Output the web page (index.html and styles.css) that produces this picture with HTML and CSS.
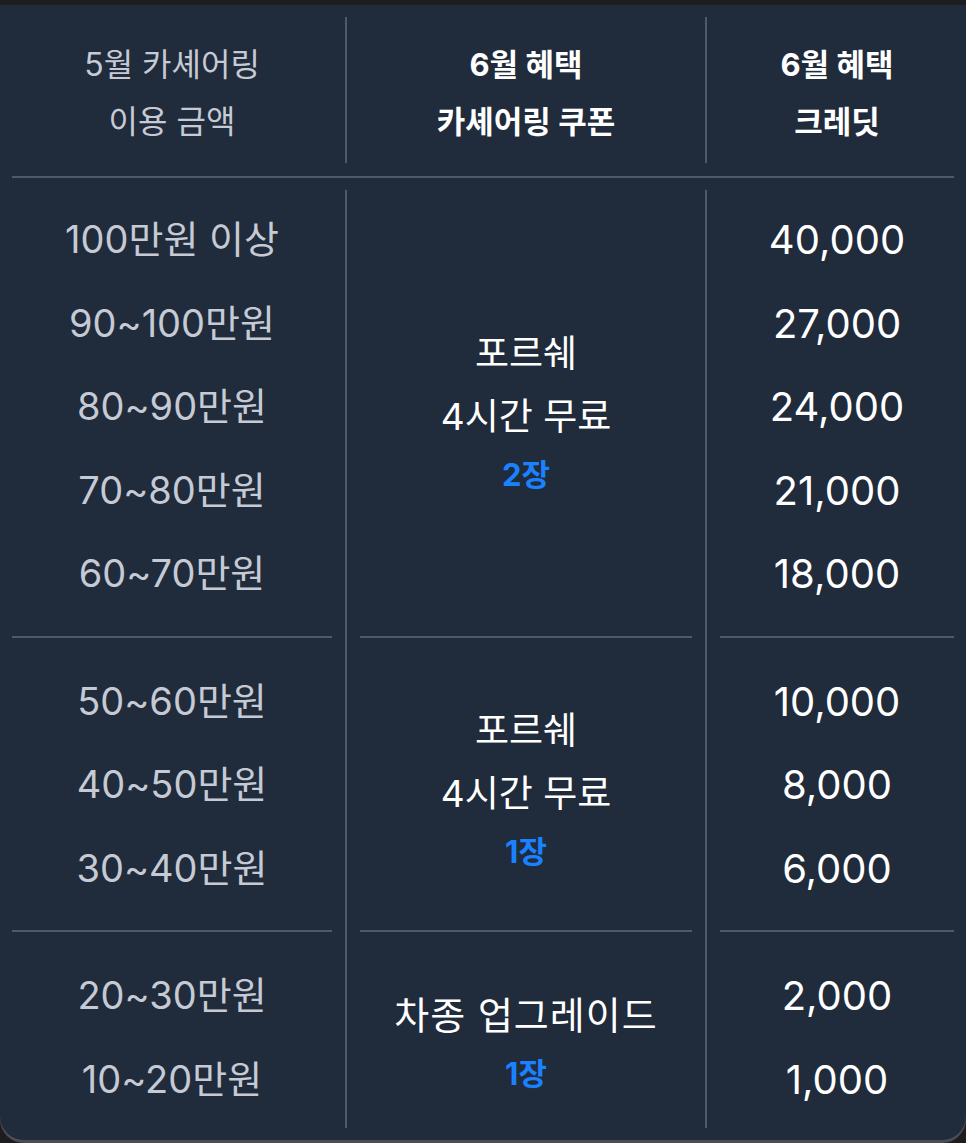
FILE: index.html
```html
<!DOCTYPE html>
<html lang="ko">
<head>
<meta charset="utf-8">
<link rel="stylesheet" href="styles.css">
</head>
<body>
<div class="panel">
  <div class="head">
    <div class="hcell c1">
      <div class="hl">5월 카셰어링</div>
      <div class="hl">이용 금액</div>
    </div>
    <div class="vdiv hv1"></div>
    <div class="hcell c2 strong">
      <div class="hl">6월 혜택</div>
      <div class="hl">카셰어링 쿠폰</div>
    </div>
    <div class="vdiv hv2"></div>
    <div class="hcell c3 strong">
      <div class="hl">6월 혜택</div>
      <div class="hl">크레딧</div>
    </div>
  </div>
  <div class="hrule"></div>
  <div class="body">
    <div class="vdiv v1"></div>
    <div class="vdiv v2"></div>

    <div class="g g1 col1 first"><div class="r">100만원 이상</div><div class="r">90~100만원</div><div class="r">80~90만원</div><div class="r">70~80만원</div><div class="r">60~70만원</div></div>
    <div class="g g1 col2 first mid1"><div class="m">포르쉐</div><div class="m">4시간 무료</div><div class="b">2장</div></div>
    <div class="g g1 col3 first"><div class="r">40,000</div><div class="r">27,000</div><div class="r">24,000</div><div class="r">21,000</div><div class="r">18,000</div></div>

    <div class="sep s1 col1"></div>
    <div class="sep s1 col2"></div>
    <div class="sep s1 col3"></div>

    <div class="g g2 col1"><div class="r">50~60만원</div><div class="r">40~50만원</div><div class="r">30~40만원</div></div>
    <div class="g g2 col2 mid"><div class="m">포르쉐</div><div class="m">4시간 무료</div><div class="b">1장</div></div>
    <div class="g g2 col3"><div class="r">10,000</div><div class="r">8,000</div><div class="r">6,000</div></div>

    <div class="sep s2 col1"></div>
    <div class="sep s2 col2"></div>
    <div class="sep s2 col3"></div>

    <div class="g g3 col1 last"><div class="r">20~30만원</div><div class="r">10~20만원</div></div>
    <div class="g g3 col2 last mid"><div class="m wide">차종 업그레이드</div><div class="b">1장</div></div>
    <div class="g g3 col3 last"><div class="r">2,000</div><div class="r">1,000</div></div>
  </div>
</div>
</body>
</html>
```
FILE: styles.css
```css
html, body {
  margin: 0;
  padding: 0;
  background: #1d1d1f;
}
body {
  width: 966px;
  height: 1143px;
  overflow: hidden;
  font-family: "Inter", "Noto Sans CJK KR", "Noto Sans", sans-serif;
}
.panel {
  margin-top: 5px;
  height: 1135px;
  box-sizing: border-box;
  background: #202b3b;
  border-radius: 0 0 24px 24px;
  box-shadow: 0 3px 0 #4b4d52;
  padding: 12px 12px 0 12px;
}
.head, .body {
  display: grid;
  grid-template-columns: 320px 13px 2px 13px 332px 13px 2px 13px 234px;
}
.head {
  height: 146px;
}
.head .c1 { grid-column: 1; }
.head .hv1 { grid-column: 3; }
.head .c2 { grid-column: 5; }
.head .hv2 { grid-column: 7; }
.head .c3 { grid-column: 9; }
.hcell {
  display: flex;
  flex-direction: column;
  justify-content: center;
  align-items: center;
  font-size: 32px;
  color: #c5cad4;
  padding-top: 6px;
}
.hcell.strong {
  color: #ffffff;
  font-weight: 700;
  font-size: 31px;
}
.hl {
  line-height: 57px;
  height: 57px;
  white-space: nowrap;
}
.vdiv {
  background: #4d5a6b;
  width: 2px;
}
.hrule {
  height: 2px;
  background: #4d5a6b;
  margin-top: 13px;
}
.body {
  margin-top: 12px;
  grid-template-rows: auto 2px auto 2px auto;
  height: 938px;
}
.v1 { grid-column: 3; grid-row: 1 / -1; }
.v2 { grid-column: 7; grid-row: 1 / -1; }
.col1 { grid-column: 1; }
.col2 { grid-column: 5; }
.col3 { grid-column: 9; }
.g1 { grid-row: 1; }
.s1 { grid-row: 2; }
.g2 { grid-row: 3; }
.s2 { grid-row: 4; }
.g3 { grid-row: 5; }
.sep {
  background: #4d5a6b;
  height: 2px;
}
.g {
  display: flex;
  flex-direction: column;
  align-items: center;
  justify-content: center;
  padding: 22px 0 20px;
}
.g.first { padding-top: 8px; }
.g.last { padding-bottom: 7px; }
.g.mid { padding-top: 30px; }
.g.mid1 { padding-top: 18px; }
.r {
  height: 83.5px;
  line-height: 83.5px;
  white-space: nowrap;
}
.col1 .r {
  color: #c5cad4;
  font-size: 38px;
}
.col3 .r {
  color: #ffffff;
  font-size: 40px;
}
.m {
  height: 63px;
  line-height: 63px;
  font-size: 37px;
  color: #ffffff;
  white-space: nowrap;
}
.m.wide {
  font-size: 38px;
  letter-spacing: 1px;
}
.b {
  height: 53px;
  line-height: 53px;
  font-size: 31px;
  font-weight: 700;
  color: #1a82ff;
}
```
